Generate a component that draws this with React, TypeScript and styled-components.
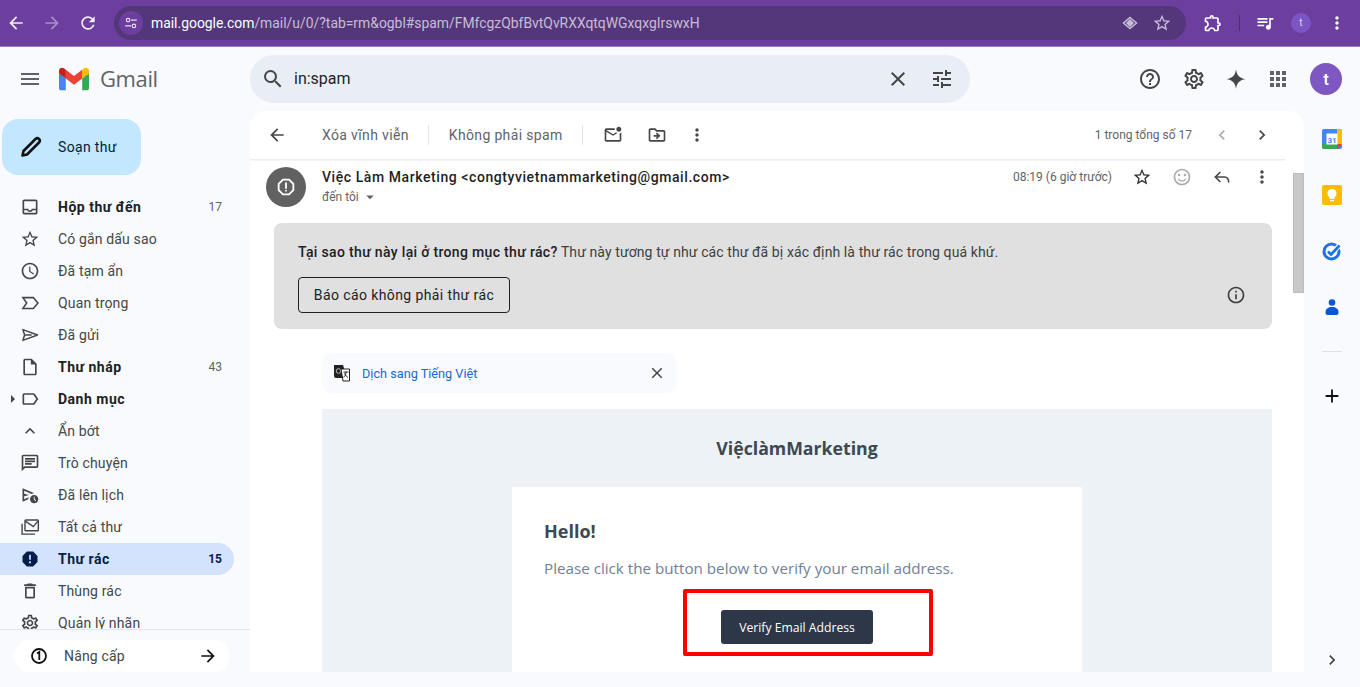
import React from "react";
import styled, { createGlobalStyle } from "styled-components";
import {
  MdArrowBack, MdArrowForward, MdRefresh, MdOutlineTune, MdHelpOutline, MdSearch, MdClose, MdApps,
  MdMoreVert, MdChevronLeft, MdChevronRight, MdOutlineSentimentSatisfied, MdOutlineMarkEmailUnread,
  MdOutlineDriveFileMove, MdInfoOutline, MdAdd, MdArrowDropDown, MdOutlineInbox, MdStarBorder, MdAccessTime,
  MdOutlineInsertDriveFile, MdOutlineLabel, MdExpandLess, MdOutlineChat,
  MdOutlineScheduleSend, MdReport, MdOutlineDelete, MdOutlineSettings, MdOutlineExtension, MdQueueMusic,
  MdMenu, MdOutlineReportGmailerrorred,
} from "react-icons/md";

const Global = createGlobalStyle`
  html, body { margin: 0; padding: 0; height: 100%; overflow: hidden; background: #f8fafd; }
  * { box-sizing: border-box; }
  body { font-family: Roboto, "Liberation Sans", sans-serif; }
`;

const Page = styled.div`
  width: 1360px; height: 687px; display: flex; flex-direction: column; overflow: hidden; background: #f8fafd;
`;

/* Browser chrome */
const ChromeBar = styled.div`
  height: 47px; flex: none; background: #6c3f9e; border-bottom: 1px solid #9a7cbd;
  display: flex; align-items: center; padding: 0 0 1px 0;
`;
const Glyph = styled.span<{ $s?: number; $c?: string; $ml?: number }>`
  display: inline-flex; align-items: center; justify-content: center; flex: none;
  width: ${p => p.$s ?? 20}px; height: ${p => p.$s ?? 20}px; color: ${p => p.$c ?? "#444746"};
  margin-left: ${p => p.$ml ?? 0}px;
  svg { width: 100%; height: 100%; display: block; }
`;
const AddressBar = styled.div`
  margin-left: 16px; width: 1072px; height: 34px; border-radius: 17px; background: #53377a;
  display: flex; align-items: center; padding: 0 14px 0 5px;
`;
const SiteChip = styled.span`
  width: 24px; height: 24px; border-radius: 50%; background: #6c3f9e;
  display: flex; align-items: center; justify-content: center; flex: none;
`;
const Url = styled.div`
  margin-left: 8px; flex: 1; font-size: 13.9px; color: #c8bcd8; white-space: nowrap;
  b { font-weight: 400; color: #fff; }
`;
const ChromeDivider = styled.span`
  width: 1px; height: 16px; background: #4b2f70; margin-left: 16px; flex: none;
`;
const ChromeAvatar = styled.span`
  width: 20px; height: 20px; border-radius: 50%; background: #7b55c4; color: #ddd; font-size: 10px;
  display: flex; align-items: center; justify-content: center; margin-left: 16px; flex: none;
`;

/* Gmail header */
const AppHeader = styled.header`
  height: 64px; flex: none; display: flex; align-items: center;
`;
const Brand = styled.div`
  width: 250px; flex: none; display: flex; align-items: center; padding-left: 18px;
`;
const LogoWord = styled.span`
  margin-left: 11px; font-family: "Open Sans", sans-serif; font-size: 22px; color: #5f6368; letter-spacing: -0.4px;
  line-height: 28px; padding-bottom: 2px;
`;
const SearchBox = styled.div`
  width: 720px; height: 48px; border-radius: 24px; background: #e9eef6; display: flex; align-items: center; padding: 0 16px 0 11px;
`;
const SearchText = styled.span`
  margin-left: 9px; flex: 1; font-size: 16px; color: #1f1f1f; line-height: 20px; margin-top: -1px;
`;
const HeaderActions = styled.div`
  flex: 1; display: flex; align-items: center; padding-left: 168px;
`;
const UserAvatar = styled.span`
  width: 32px; height: 32px; border-radius: 50%; background: #7e57c2; color: #fff; font-size: 17px; font-weight: 500;
  display: flex; align-items: center; justify-content: center; margin-left: 20px;
`;

/* Three-column content */
const Content = styled.div`
  flex: 1; min-height: 0; display: flex;
`;
const Sidebar = styled.aside`
  width: 250px; flex: none; display: flex; flex-direction: column; padding-top: 8px;
`;
const Compose = styled.div`
  margin-left: 2px; width: 139px; height: 56px; border-radius: 16px; background: #c2e7ff; flex: none;
  display: flex; align-items: center; padding-left: 17px; color: #001d35; font-size: 14px; font-weight: 400;
  letter-spacing: 0.35px; gap: 15px;
`;
const Nav = styled.nav`
  margin-top: 16px; flex: 1; min-height: 0; overflow: hidden;
`;
const NavRow = styled.div<{ $active?: boolean; $bold?: boolean }>`
  position: relative; width: 234px; height: 32px; display: flex; align-items: center; padding: 0 12px 0 20px;
  border-radius: 0 16px 16px 0; font-size: 14px;
  letter-spacing: ${p => (p.$bold ? "0.5px" : "0.15px")};
  font-weight: ${p => (p.$bold ? 700 : 400)};
  background: ${p => (p.$active ? "#d3e3fd" : "transparent")};
  color: ${p => (p.$active ? "#041e49" : p.$bold ? "#202124" : "#444746")};
`;
const NavLabel = styled.span`
  flex: 1; margin-left: 18px; white-space: nowrap;
`;
const NavCount = styled.span<{ $strong?: boolean }>`
  font-size: 12px; letter-spacing: 0; font-weight: ${p => (p.$strong ? 700 : 400)}; color: ${p => (p.$strong ? "#041e49" : "#5f6368")};
`;
const Caret = styled.span`
  position: absolute; left: 11px; top: 12px; border-left: 4px solid #444746;
  border-top: 4px solid transparent; border-bottom: 4px solid transparent;
`;
const UpgradeZone = styled.div`
  flex: none; border-top: 1px solid #e3e5e8; height: 58px; padding: 10px 20px 15px 14px;
`;
const UpgradePill = styled.div`
  height: 32px; border-radius: 16px; background: #fff; display: flex; align-items: center; padding: 0 12px 0 15px;
  font-size: 14px; color: #444746; letter-spacing: 0.15px;
`;
const UpgradeLabel = styled.span`
  flex: 1; margin-left: 15px;
`;

/* Main panel */
const Main = styled.main`
  position: relative; width: 1054px; flex: none; margin-bottom: 15px; background: #fff; border-radius: 16px 16px 0 0;
  display: flex; flex-direction: column; overflow: hidden;
`;
const Toolbar = styled.div`
  height: 49px; flex: none; width: 1036px; display: flex; align-items: center; padding: 0 14px 0 17px;
  border-bottom: 1px solid #ececec; box-shadow: 0 1px 1px rgba(0,0,0,.04);
`;
const ToolText = styled.span<{ $ml?: number }>`
  font-size: 14px; color: #5f6368; letter-spacing: 0.35px; white-space: nowrap; margin-left: ${p => p.$ml ?? 0}px;
`;
const ToolDivider = styled.span`
  width: 1px; height: 20px; background: #e6e6e6; margin: 0 20px 0 19px; flex: none;
`;
const Pager = styled.div`
  margin-left: auto; display: flex; align-items: center; font-size: 12px; color: #5f6368;
`;
const Scroll = styled.div`
  position: absolute; right: 0; top: 62px; width: 11px; height: 120px; background: #c8c8c8; border: 1px solid #bdbdbd;
`;
const Pane = styled.div`
  flex: 1; min-height: 0; overflow: hidden; padding: 7px 32px 0 16px;
`;
const MsgHead = styled.div`
  display: flex; align-items: flex-start; height: 56px;
`;
const SenderAvatar = styled.span`
  width: 40px; height: 40px; border-radius: 50%; background: #616161; color: #fff; flex: none;
  display: flex; align-items: center; justify-content: center;
`;
const SenderCol = styled.div`
  margin-left: 16px; flex: 1; padding-top: 2px;
`;
const Sender = styled.div`
  font-size: 14px; font-weight: 500; color: #1f1f1f; letter-spacing: 0.57px; line-height: 16px;
`;
const ToMe = styled.div`
  display: flex; align-items: center; font-size: 12px; color: #5f6368; margin-top: 3px; line-height: 16px;
`;
const MsgMeta = styled.div`
  display: flex; align-items: center; height: 20px; font-size: 12px; color: #5f6368; letter-spacing: 0.01px;
`;
const SpamBox = styled.section`
  margin-left: 8px; height: 106px; background: #e0e0e0; border-radius: 8px; padding: 20px 24px 0;
  position: relative; font-size: 14px; color: #3c4043; letter-spacing: 0.1px; line-height: 18px;
  b { font-weight: 500; color: #202124; letter-spacing: 0.33px; }
`;
const SpamRow = styled.div`
  display: flex; align-items: center; justify-content: space-between; margin-top: 16px; padding-right: 2px;
`;
const SpamButton = styled.div`
  width: 212px; height: 36px; border: 1px solid #202124; border-radius: 4px; color: #202124;
  display: flex; align-items: center; justify-content: center; font-size: 14px; letter-spacing: 0.4px;
`;
const Body = styled.div`
  margin: 24px 0 0 56px;
`;
const TranslateBar = styled.div`
  width: 355px; height: 40px; border-radius: 10px; background: #f8fafd; display: flex; align-items: center; padding: 0 11px;
`;
const TranslateLink = styled.span`
  margin-left: 11px; flex: 1; font-size: 12.7px; color: #1a66d6;
`;
const MailCanvas = styled.div`
  margin-top: 16px; background: #edf2f7; height: 300px; padding-top: 25px; font-family: "Open Sans", sans-serif;
`;
const MailTitle = styled.div`
  text-align: center; font-size: 17.7px; font-weight: 700; color: #3d4852; line-height: 28px;
`;
const MailCard = styled.div`
  margin: 25px auto 0; width: 570px; height: 250px; background: #fff; border-radius: 2px; padding: 31px 32px 0;
`;
const Hello = styled.div`
  font-size: 18px; font-weight: 700; color: #3d4852; line-height: 26px;
`;
const MailText = styled.div`
  margin-top: 12px; font-size: 15.2px; color: #718096; line-height: 24px; white-space: nowrap;
`;
const ButtonRow = styled.div`
  position: relative; margin-top: 30px; display: flex; justify-content: center;
`;
const VerifyButton = styled.div`
  width: 152px; height: 34px; background: #2d3748; border-radius: 3px; color: #fff; font-size: 12.2px;
  display: flex; align-items: center; justify-content: center;
`;
const RedMark = styled.div`
  position: absolute; left: 139px; top: -21px; width: 250px; height: 67px; border: 4px solid #ff0000; border-radius: 2px;
`;

/* Right rail */
const Rail = styled.aside`
  width: 56px; flex: none; display: flex; flex-direction: column; align-items: center; padding-bottom: 17px;
`;
const RailSlot = styled.div`
  height: 56px; width: 100%; display: flex; align-items: center; justify-content: center; flex: none;
`;
const RailDivider = styled.div`
  width: 20px; height: 1px; background: #dfe1e5; margin-top: 16px; flex: none;
`;
const RailBottom = styled.div`
  margin-top: auto; height: 20px; display: flex; align-items: center;
`;
const RailPlus = styled.div`
  margin-top: 16px; height: 56px; display: flex; align-items: center;
`;

const GmailLogo = () => (
  <svg width="30" height="23" viewBox="0 0 256 193">
    <path fill="#4285F4" d="M58.2 192V93.1L27.5 65 0 49.4V174.5C0 184.2 7.8 192 17.5 192z" />
    <path fill="#34A853" d="M197.8 192h40.7c9.7 0 17.5-7.8 17.5-17.5V49.4l-31.1 17.8-27.1 25.9z" />
    <path fill="#EA4335" d="M58.2 93.1 54 54.5l4.2-37L128 69.9l69.8-52.4 4.7 33-4.7 42.6L128 145.5z" />
    <path fill="#FBBC04" d="M197.8 17.5V93.1L256 49.4V26.2c0-21.6-24.6-33.9-41.9-21z" />
    <path fill="#C5221F" d="M0 49.4 26.8 69.5 58.2 93.1V17.5L41.9 5.2C24.6-7.7 0 4.6 0 26.2z" />
  </svg>
);
const SiteControls = () => (
  <svg viewBox="0 0 24 24" fill="none" stroke="currentColor" strokeWidth="2">
    <circle cx="7" cy="7" r="3" /><circle cx="17" cy="17" r="3" />
    <path d="M12 7h10M2 17h10" />
  </svg>
);
const ImportantOutline = () => (
  <svg viewBox="0 0 24 24" fill="none" stroke="currentColor" strokeWidth="1.9" strokeLinejoin="miter">
    <path d="M3.500 5.500H16L21.500 12 16 18.500H3.500L8 12z" />
  </svg>
);
const SendOutline = () => (
  <svg viewBox="0 0 24 24" fill="none" stroke="currentColor" strokeWidth="1.8" strokeLinejoin="round">
    <path d="M3.500 5.500 21 12 3.500 18.500 5.500 12zM5.500 12H14" />
  </svg>
);
const AllMail = () => (
  <svg viewBox="0 0 24 24" fill="none" stroke="currentColor" strokeWidth="1.700">
    <rect x="6" y="3.500" width="16" height="13" rx="1" /><path d="m6.500 5 9.500 6.500L21.500 5" /><path d="M2.500 8v12.500H18" />
  </svg>
);
const Sparkle = () => (
  <svg viewBox="0 0 24 24" fill="currentColor"><path d="M12 1.500C13 8 16 11 22.500 12 16 13 13 16 12 22.500 11 16 8 13 1.500 12 8 11 11 8 12 1.500z" /></svg>
);
const Pencil = () => (
  <svg viewBox="0 0 24 24" fill="none" stroke="currentColor" strokeWidth="2.600" strokeLinejoin="round">
    <path d="M3.500 20.500 4.500 16 16.500 4a2 2 0 0 1 3.500 3.500L8 19.500z" />
  </svg>
);
const ReplyOutline = () => (
  <svg viewBox="0 0 24 24" fill="none" stroke="currentColor" strokeWidth="1.900">
    <path d="M10 6 4 12l6 6" /><path d="M4.500 12H15c3.500 0 5 2.500 5 6.500" />
  </svg>
);
const TranslateIcon = () => (
  <svg viewBox="0 0 18 18">
    <path fill="#222" d="M1 1h9l4 13H3a2 2 0 0 1-2-2z" />
    <circle cx="5.500" cy="7" r="2.300" fill="none" stroke="#bbb" strokeWidth="1" />
    <path fill="#fff" stroke="#222" d="M8 5h8.500v12H10z" />
    <path stroke="#222" d="M10.500 8h5M13 8c0 3-1.500 5-2.500 5M11.500 9.500c1 2 2.500 3.500 3.500 4" fill="none" />
  </svg>
);
const CalendarIcon = () => (
  <svg viewBox="0 0 20 20">
    <rect width="20" height="20" rx="2" fill="#4285f4" />
    <path fill="#fbbc04" d="M15 0h3a2 2 0 0 1 2 2v14h-5z" />
    <path fill="#34a853" d="M0 15h15v5H2a2 2 0 0 1-2-2z" />
    <path fill="#ea4335" d="M15 15h5l-5 5z" />
    <rect x="4.500" y="4.500" width="11" height="11" fill="#fff" />
    <text x="10" y="13.500" fontSize="8" fontWeight="700" fontFamily="Roboto, sans-serif" textAnchor="middle" fill="#4285f4">31</text>
  </svg>
);
const KeepIcon = () => (
  <svg viewBox="0 0 20 20">
    <rect width="20" height="20" rx="2" fill="#fbbc04" />
    <circle cx="10" cy="8.500" r="4.500" fill="#fff" /><rect x="7.500" y="11" width="5" height="3" fill="#fff" /><rect x="8" y="15" width="4" height="1.300" fill="#fff" />
  </svg>
);
const TasksIcon = () => (
  <svg viewBox="0 0 20 20" fill="none">
    <circle cx="9.500" cy="10.500" r="7.500" stroke="#1a73e8" strokeWidth="3" />
    <path d="m6 10 3 3 9-9" stroke="#fff" strokeWidth="5" />
    <path d="m6 10.500 3 3 8.500-9" stroke="#1a73e8" strokeWidth="2.800" />
  </svg>
);
const ContactsIcon = () => (
  <svg viewBox="0 0 20 20" fill="#0b57d0">
    <circle cx="10" cy="5.500" r="3.300" />
    <path d="M3.500 15c0-3 2.800-5 6.500-5s6.500 2 6.500 5v1a2 2 0 0 1-2 2h-9a2 2 0 0 1-2-2z" />
  </svg>
);

type NavItem = { icon: React.ReactNode; label: string; count?: string; bold?: boolean; active?: boolean; caret?: boolean };
const navItems: NavItem[] = [
  { icon: <MdOutlineInbox />, label: "Hộp thư đến", count: "17", bold: true },
  { icon: <MdStarBorder />, label: "Có gắn dấu sao" },
  { icon: <MdAccessTime />, label: "Đã tạm ẩn" },
  { icon: <ImportantOutline />, label: "Quan trọng" },
  { icon: <SendOutline />, label: "Đã gửi" },
  { icon: <MdOutlineInsertDriveFile />, label: "Thư nháp", count: "43", bold: true },
  { icon: <MdOutlineLabel />, label: "Danh mục", bold: true, caret: true },
  { icon: <MdExpandLess />, label: "Ẩn bớt" },
  { icon: <MdOutlineChat />, label: "Trò chuyện" },
  { icon: <MdOutlineScheduleSend />, label: "Đã lên lịch" },
  { icon: <AllMail />, label: "Tất cả thư" },
  { icon: <MdReport />, label: "Thư rác", count: "15", bold: true, active: true },
  { icon: <MdOutlineDelete />, label: "Thùng rác" },
  { icon: <MdOutlineSettings />, label: "Quản lý nhãn" },
];

export default function App() {
  return (
    <Page>
      <Global />
      <ChromeBar>
        <Glyph $s={20} $c="#f3eefa" $ml={6}><MdArrowBack /></Glyph>
        <Glyph $s={20} $c="#a68ec6" $ml={16}><MdArrowForward /></Glyph>
        <Glyph $s={20} $c="#f3eefa" $ml={16}><MdRefresh /></Glyph>
        <AddressBar>
          <SiteChip><Glyph $s={14} $c="#e8e0f0"><SiteControls /></Glyph></SiteChip>
          <Url><b>mail.google.com</b>/mail/u/0/?tab=rm&amp;ogbl#spam/FMfcgzQbfBvtQvRXXqtqWGxqxgIrswxH</Url>
          <Glyph $s={18} $c="#c8bcd8">
            <svg viewBox="0 0 18 18" fill="none" stroke="currentColor" strokeWidth="1.500"><path d="M9 3.500 15.500 9 9 14.500 2.500 9z" /><path d="M9 6 12 9 9 12 6 9z" fill="currentColor" /></svg>
          </Glyph>
          <Glyph $s={20} $c="#c8bcd8" $ml={13}><MdStarBorder /></Glyph>
        </AddressBar>
        <Glyph $s={20} $c="#fff" $ml={17}><MdOutlineExtension /></Glyph>
        <ChromeDivider />
        <Glyph $s={20} $c="#fff" $ml={15}><MdQueueMusic /></Glyph>
        <ChromeAvatar>t</ChromeAvatar>
        <Glyph $s={20} $c="#fff" $ml={16}><MdMoreVert /></Glyph>
      </ChromeBar>

      <AppHeader>
        <Brand>
          <Glyph $s={24} $c="#5f6368"><MdMenu /></Glyph>
          <Glyph $s={30} $ml={17}><GmailLogo /></Glyph>
          <LogoWord>Gmail</LogoWord>
        </Brand>
        <SearchBox>
          <Glyph $s={24} $c="#444746"><MdSearch /></Glyph>
          <SearchText>in:spam</SearchText>
          <Glyph $s={24} $c="#444746"><MdClose /></Glyph>
          <Glyph $s={24} $c="#444746" $ml={20}><MdOutlineTune /></Glyph>
        </SearchBox>
        <HeaderActions>
          <Glyph $s={24} $c="#444746"><MdHelpOutline /></Glyph>
          <Glyph $s={24} $c="#444746" $ml={20}><MdOutlineSettings /></Glyph>
          <Glyph $s={22} $c="#444746" $ml={19}><Sparkle /></Glyph>
          <Glyph $s={24} $c="#5f6368" $ml={19}><MdApps /></Glyph>
          <UserAvatar>t</UserAvatar>
        </HeaderActions>
      </AppHeader>

      <Content>
        <Sidebar>
          <Compose>
            <Glyph $s={24} $c="#111"><Pencil /></Glyph>
            Soạn thư
          </Compose>
          <Nav>
            {navItems.map(item => (
              <NavRow key={item.label} $active={item.active} $bold={item.bold}>
                {item.caret && <Caret />}
                <Glyph $s={20} $c={item.active ? "#041e49" : "#444746"}>{item.icon}</Glyph>
                <NavLabel>{item.label}</NavLabel>
                {item.count && <NavCount $strong={item.active}>{item.count}</NavCount>}
              </NavRow>
            ))}
          </Nav>
          <UpgradeZone>
            <UpgradePill>
              <Glyph $s={20} $c="#111">
                <svg viewBox="0 0 20 20" fill="none" stroke="currentColor" strokeWidth="1.800"><circle cx="10" cy="10" r="7" /><path d="M8 7.500 10.300 6v8" /></svg>
              </Glyph>
              <UpgradeLabel>Nâng cấp</UpgradeLabel>
              <Glyph $s={20} $c="#111"><MdArrowForward /></Glyph>
            </UpgradePill>
          </UpgradeZone>
        </Sidebar>

        <Main>
          <Toolbar>
            <Glyph $s={20} $c="#444746"><MdArrowBack /></Glyph>
            <ToolText $ml={35}>Xóa vĩnh viễn</ToolText>
            <ToolDivider />
            <ToolText>Không phải spam</ToolText>
            <ToolDivider />
            <Glyph $s={20} $c="#444746"><MdOutlineMarkEmailUnread /></Glyph>
            <Glyph $s={20} $c="#444746" $ml={24}><MdOutlineDriveFileMove /></Glyph>
            <Glyph $s={20} $c="#444746" $ml={20}><MdMoreVert /></Glyph>
            <Pager>
              1 trong tổng số 17
              <Glyph $s={20} $c="#a9abad" $ml={20}><MdChevronLeft /></Glyph>
              <Glyph $s={20} $c="#444746" $ml={20}><MdChevronRight /></Glyph>
            </Pager>
          </Toolbar>
          <Scroll />
          <Pane>
            <MsgHead>
              <SenderAvatar><Glyph $s={22} $c="#fff"><MdOutlineReportGmailerrorred /></Glyph></SenderAvatar>
              <SenderCol>
                <Sender>Việc Làm Marketing &lt;congtyvietnammarketing@gmail.com&gt;</Sender>
                <ToMe>đến tôi<Glyph $s={18} $c="#5f6368" $ml={2}><MdArrowDropDown /></Glyph></ToMe>
              </SenderCol>
              <MsgMeta>
                08:19 (6 giờ trước)
                <Glyph $s={20} $c="#333" $ml={20}><MdStarBorder /></Glyph>
                <Glyph $s={20} $c="#a9abad" $ml={20}><MdOutlineSentimentSatisfied /></Glyph>
                <Glyph $s={20} $c="#444746" $ml={20}><ReplyOutline /></Glyph>
                <Glyph $s={20} $c="#444746" $ml={20}><MdMoreVert /></Glyph>
              </MsgMeta>
            </MsgHead>
            <SpamBox>
              <div><b>Tại sao thư này lại ở trong mục thư rác?</b> Thư này tương tự như các thư đã bị xác định là thư rác trong quá khứ.</div>
              <SpamRow>
                <SpamButton>Báo cáo không phải thư rác</SpamButton>
                <Glyph $s={20} $c="#3c4043"><MdInfoOutline /></Glyph>
              </SpamRow>
            </SpamBox>
            <Body>
              <TranslateBar>
                <Glyph $s={18}><TranslateIcon /></Glyph>
                <TranslateLink>Dịch sang Tiếng Việt</TranslateLink>
                <Glyph $s={18} $c="#444746"><MdClose /></Glyph>
              </TranslateBar>
              <MailCanvas>
                <MailTitle>ViệclàmMarketing</MailTitle>
                <MailCard>
                  <Hello>Hello!</Hello>
                  <MailText>Please click the button below to verify your email address.</MailText>
                  <ButtonRow>
                    <VerifyButton>Verify Email Address</VerifyButton>
                    <RedMark />
                  </ButtonRow>
                </MailCard>
              </MailCanvas>
            </Body>
          </Pane>
        </Main>

        <Rail>
          <RailSlot><Glyph $s={20}><CalendarIcon /></Glyph></RailSlot>
          <RailSlot><Glyph $s={20}><KeepIcon /></Glyph></RailSlot>
          <RailSlot><Glyph $s={20}><TasksIcon /></Glyph></RailSlot>
          <RailSlot><Glyph $s={20}><ContactsIcon /></Glyph></RailSlot>
          <RailDivider />
          <RailPlus><Glyph $s={22} $c="#111"><MdAdd /></Glyph></RailPlus>
          <RailBottom><Glyph $s={20} $c="#444746"><MdChevronRight /></Glyph></RailBottom>
        </Rail>
      </Content>
    </Page>
  );
}
